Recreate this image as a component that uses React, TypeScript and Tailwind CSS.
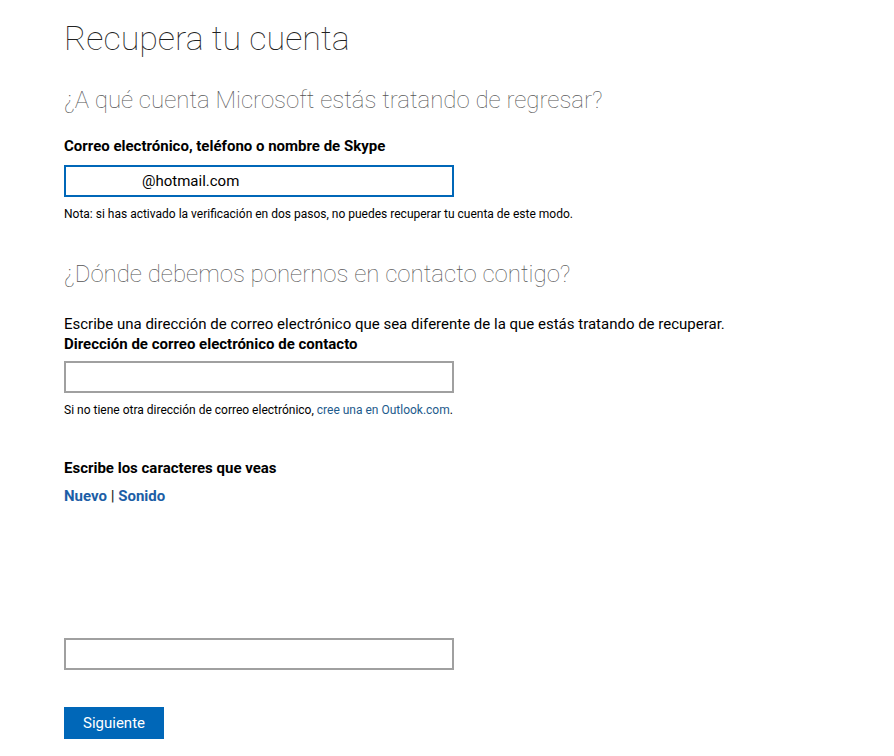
export default function App() {
  return (
    <div className="min-h-[756px] bg-white font-['Roboto',sans-serif] text-black">
      <div className="pl-16 pt-[14px]">
        <h1 className="text-[34px] font-thin leading-[48px] text-[#222]">Recupera tu cuenta</h1>

        <h2 className="mt-[22px] text-[24px] font-thin leading-[32px] text-[#555]">
          ¿A qué cuenta Microsoft estás tratando de regresar?
        </h2>

        <label className="mt-[20px] block text-[15px] font-bold leading-[20px]">
          Correo electrónico, teléfono o nombre de Skype
        </label>
        <input
          type="text"
          defaultValue="@hotmail.com"
          className="mt-[9px] block h-[32px] w-[390px] border-2 border-[#0067b8] pl-[76px] text-[15px] outline-none"
        />
        <p className="mt-[9px] text-[12px] leading-[16px]">
          Nota: si has activado la verificación en dos pasos, no puedes recuperar tu cuenta de este modo.
        </p>

        <h2 className="mt-[36px] text-[24px] font-thin leading-[32px] text-[#555]">
          ¿Dónde debemos ponernos en contacto contigo?
        </h2>

        <p className="mt-[24px] text-[15px] leading-[20px]">
          Escribe una dirección de correo electrónico que sea diferente de la que estás tratando de recuperar.
        </p>
        <label className="block text-[15px] font-bold leading-[20px]">
          Dirección de correo electrónico de contacto
        </label>
        <input
          type="text"
          className="mt-[7px] block h-[32px] w-[390px] border-2 border-[#a0a0a0] text-[15px] outline-none"
        />
        <p className="mt-[9px] text-[12px] leading-[16px]">
          Si no tiene otra dirección de correo electrónico,{" "}
          <a href="#" className="text-[#1d5a8c]">cree una en Outlook.com</a>.
        </p>

        <p className="mt-[40px] text-[15px] font-bold leading-[20px]">Escribe los caracteres que veas</p>
        <p className="mt-[8px] text-[15px] font-bold leading-[20px]">
          <a href="#" className="text-[#1c5ea6]">Nuevo</a>
          <span className="text-[#333]"> | </span>
          <a href="#" className="text-[#1c5ea6]">Sonido</a>
        </p>

        <div className="h-[132px]" />

        <input
          type="text"
          className="block h-[32px] w-[390px] border-2 border-[#a0a0a0] text-[15px] outline-none"
        />

        <button className="mt-[37px] h-[32px] w-[100px] bg-[#0067b8] text-[15px] text-white">
          Siguiente
        </button>
      </div>
    </div>
  );
}
